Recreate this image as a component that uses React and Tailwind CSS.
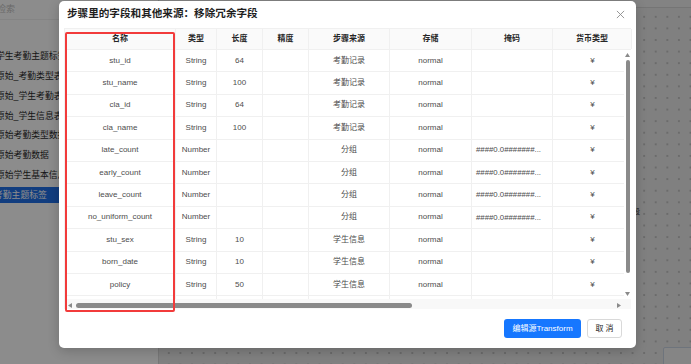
import React from 'react';

const rows = [
    { name: 'stu_id', type: 'String', len: '64', src: '考勤记录', mask: '' },
    { name: 'stu_name', type: 'String', len: '100', src: '考勤记录', mask: '' },
    { name: 'cla_id', type: 'String', len: '64', src: '考勤记录', mask: '' },
    { name: 'cla_name', type: 'String', len: '100', src: '考勤记录', mask: '' },
    { name: 'late_count', type: 'Number', len: '', src: '分组', mask: '####0.0#######...' },
    { name: 'early_count', type: 'Number', len: '', src: '分组', mask: '####0.0#######...' },
    { name: 'leave_count', type: 'Number', len: '', src: '分组', mask: '####0.0#######...' },
    { name: 'no_uniform_count', type: 'Number', len: '', src: '分组', mask: '####0.0#######...' },
    { name: 'stu_sex', type: 'String', len: '10', src: '学生信息', mask: '' },
    { name: 'born_date', type: 'String', len: '10', src: '学生信息', mask: '' },
    { name: 'policy', type: 'String', len: '50', src: '学生信息', mask: '' },
    { name: 'class_name', type: 'String', len: '100', src: '学生信息', mask: '' },
];

const headers = ['名称', '类型', '长度', '精度', '步骤来源', '存储', '掩码', '货币类型'];

const treeItems = [
    '学生考勤主题标签',
    '原始_考勤类型表',
    '原始_学生考勤表',
    '原始_学生信息表',
    '原始考勤类型数据',
    '原始考勤数据',
    '原始学生基本信息',
    '考勤主题标签',
];

const cols = 'grid grid-cols-[111px_41px_46px_46px_81px_82px_81px_79px]';

const App = () => {
    return (
        <div className="relative w-[691px] h-[364px] overflow-hidden flex font-['Liberation_Sans','Noto_Sans_CJK_SC',sans-serif]">
            {/* page behind the dialog */}
            <div className="w-[159px] h-full bg-white border-r border-[#d9d9d9] flex flex-col">
                <div className="h-[20px] border-b border-[#f0f0f0] flex items-center pl-[1px] text-[9px] text-[#bfbfbf]">
                    <span className="ml-[-4px]">检索</span>
                </div>
                <div className="pt-[27px] flex flex-col text-[8.8px] text-[#2b2b2b] whitespace-nowrap">
                    {treeItems.map((t, i) => (
                        <div key={t} className="h-[19.8px] flex items-center">
                            <div className={`w-full h-[16px] flex items-center ${i === 7 ? 'bg-[#1f6fe8] text-white' : ''}`}>
                                <span className={i === 7 ? 'ml-[-6px]' : 'ml-[-4px]'}>{t}</span>
                            </div>
                        </div>
                    ))}
                </div>
            </div>
            <div className="relative flex-1 h-full flex flex-col bg-[#e9e9e9]">
                <div className="h-[8px] bg-[#efefef] border-b border-[#d6d6d6]" />
                <div className="flex-1 bg-[radial-gradient(circle,#c4c4c4_0.8px,transparent_1px)] bg-[size:11.6px_11.6px] bg-[position:4px_3px]" />
                <span className="absolute left-[467px] top-[207px] text-[7px] text-[#333]">字段</span>
                <div className="absolute left-[504px] top-[347px] w-[70px] h-[40px] border border-[#c9d3e2] bg-[#f2f2f2] rounded-[2px]" />
            </div>

            {/* mask */}
            <div className="absolute inset-0 bg-black/45" />

            {/* dialog */}
            <div className="absolute left-[59px] top-[1px] w-[577px] h-[347px] bg-white rounded-[5px] shadow-[0_3px_12px_rgba(0,0,0,0.2)] flex flex-col">
                <div className="h-[27px] flex items-center justify-between pl-[8px] pr-[11px] pb-[2px]">
                    <span className="text-[10.6px] font-bold text-[#1f1f1f]">步骤里的字段和其他来源：移除冗余字段</span>
                    <svg width="9" height="9" viewBox="0 0 10 10" className="mt-[1px]">
                        <path d="M1 1L9 9M9 1L1 9" stroke="#8c8c8c" strokeWidth="1" />
                    </svg>
                </div>

                <div className="relative mx-[5px] w-[567px] flex flex-col border-t border-l border-[#f0f0f0]">
                    <div className={`${cols} h-[21px] bg-[#fafafa] border-b border-[#f0f0f0] text-[8px] font-bold text-[#262626]`}>
                        {headers.map((h) => (
                            <div key={h} className="flex items-center justify-center border-r border-[#f0f0f0]">{h}</div>
                        ))}
                    </div>
                    <div className="relative h-[249px] overflow-hidden">
                        {rows.map((r) => (
                            <div key={r.name} className={`${cols} h-[22.4px] border-b border-[#f0f0f0] text-[8px] text-[#4d4d4d]`}>
                                <div className="flex items-center justify-center border-r border-[#f0f0f0]">{r.name}</div>
                                <div className="flex items-center justify-center border-r border-[#f0f0f0]">{r.type}</div>
                                <div className="flex items-center justify-center border-r border-[#f0f0f0]">{r.len}</div>
                                <div className="border-r border-[#f0f0f0]" />
                                <div className="flex items-center justify-center border-r border-[#f0f0f0]">{r.src}</div>
                                <div className="flex items-center justify-center border-r border-[#f0f0f0]">normal</div>
                                <div className="flex items-center pl-[4px] border-r border-[#f0f0f0] text-[7.8px] whitespace-nowrap overflow-hidden">{r.mask}</div>
                                <div className="flex items-center justify-center">¥</div>
                            </div>
                        ))}
                        {/* vertical scrollbar */}
                        <div className="absolute right-0 top-0 bottom-0 w-[7px] bg-white flex flex-col items-center">
                            <svg width="5" height="4" viewBox="0 0 5 4" className="mt-[3px]"><path d="M2.5 0L5 4H0z" fill="#8a8a8a" /></svg>
                            <div className="mt-[3px] w-[4px] h-[213px] rounded-full bg-[#8a8a8a]" />
                            <svg width="5" height="4" viewBox="0 0 5 4" className="mt-[19px]"><path d="M0 0H5L2.5 4z" fill="#8a8a8a" /></svg>
                        </div>
                    </div>
                    {/* horizontal scrollbar */}
                    <div className="h-[10px] flex items-center pt-[2px] bg-[#f8f8f8]">
                        <svg width="4" height="5" viewBox="0 0 4 5" className="ml-[3px]"><path d="M0 2.5L4 0V5z" fill="#8a8a8a" /></svg>
                        <div className="ml-[4px] w-[336px] h-[5px] rounded-full bg-[#8a8a8a]" />
                        <svg width="4" height="5" viewBox="0 0 4 5" className="ml-[205px]"><path d="M4 2.5L0 0V5z" fill="#8a8a8a" /></svg>
                        <div className="flex-1" />
                    </div>

                    {/* annotation */}
                    <div className="absolute left-0 top-[3px] w-[110px] h-[280px] border-2 border-[#f23b3b] rounded-[2px]" />
                </div>

                <div className="flex justify-end gap-[6px] pt-[10px] pr-[14px]">
                    <button className="h-[19px] w-[77px] rounded-[3px] bg-[#1677ff] text-white text-[8px]">编辑源Transform</button>
                    <button className="h-[19px] w-[35px] rounded-[3px] border border-[#d9d9d9] bg-white text-[#262626] text-[8px]">取 消</button>
                </div>
            </div>
        </div>
    );
};

export default App;
